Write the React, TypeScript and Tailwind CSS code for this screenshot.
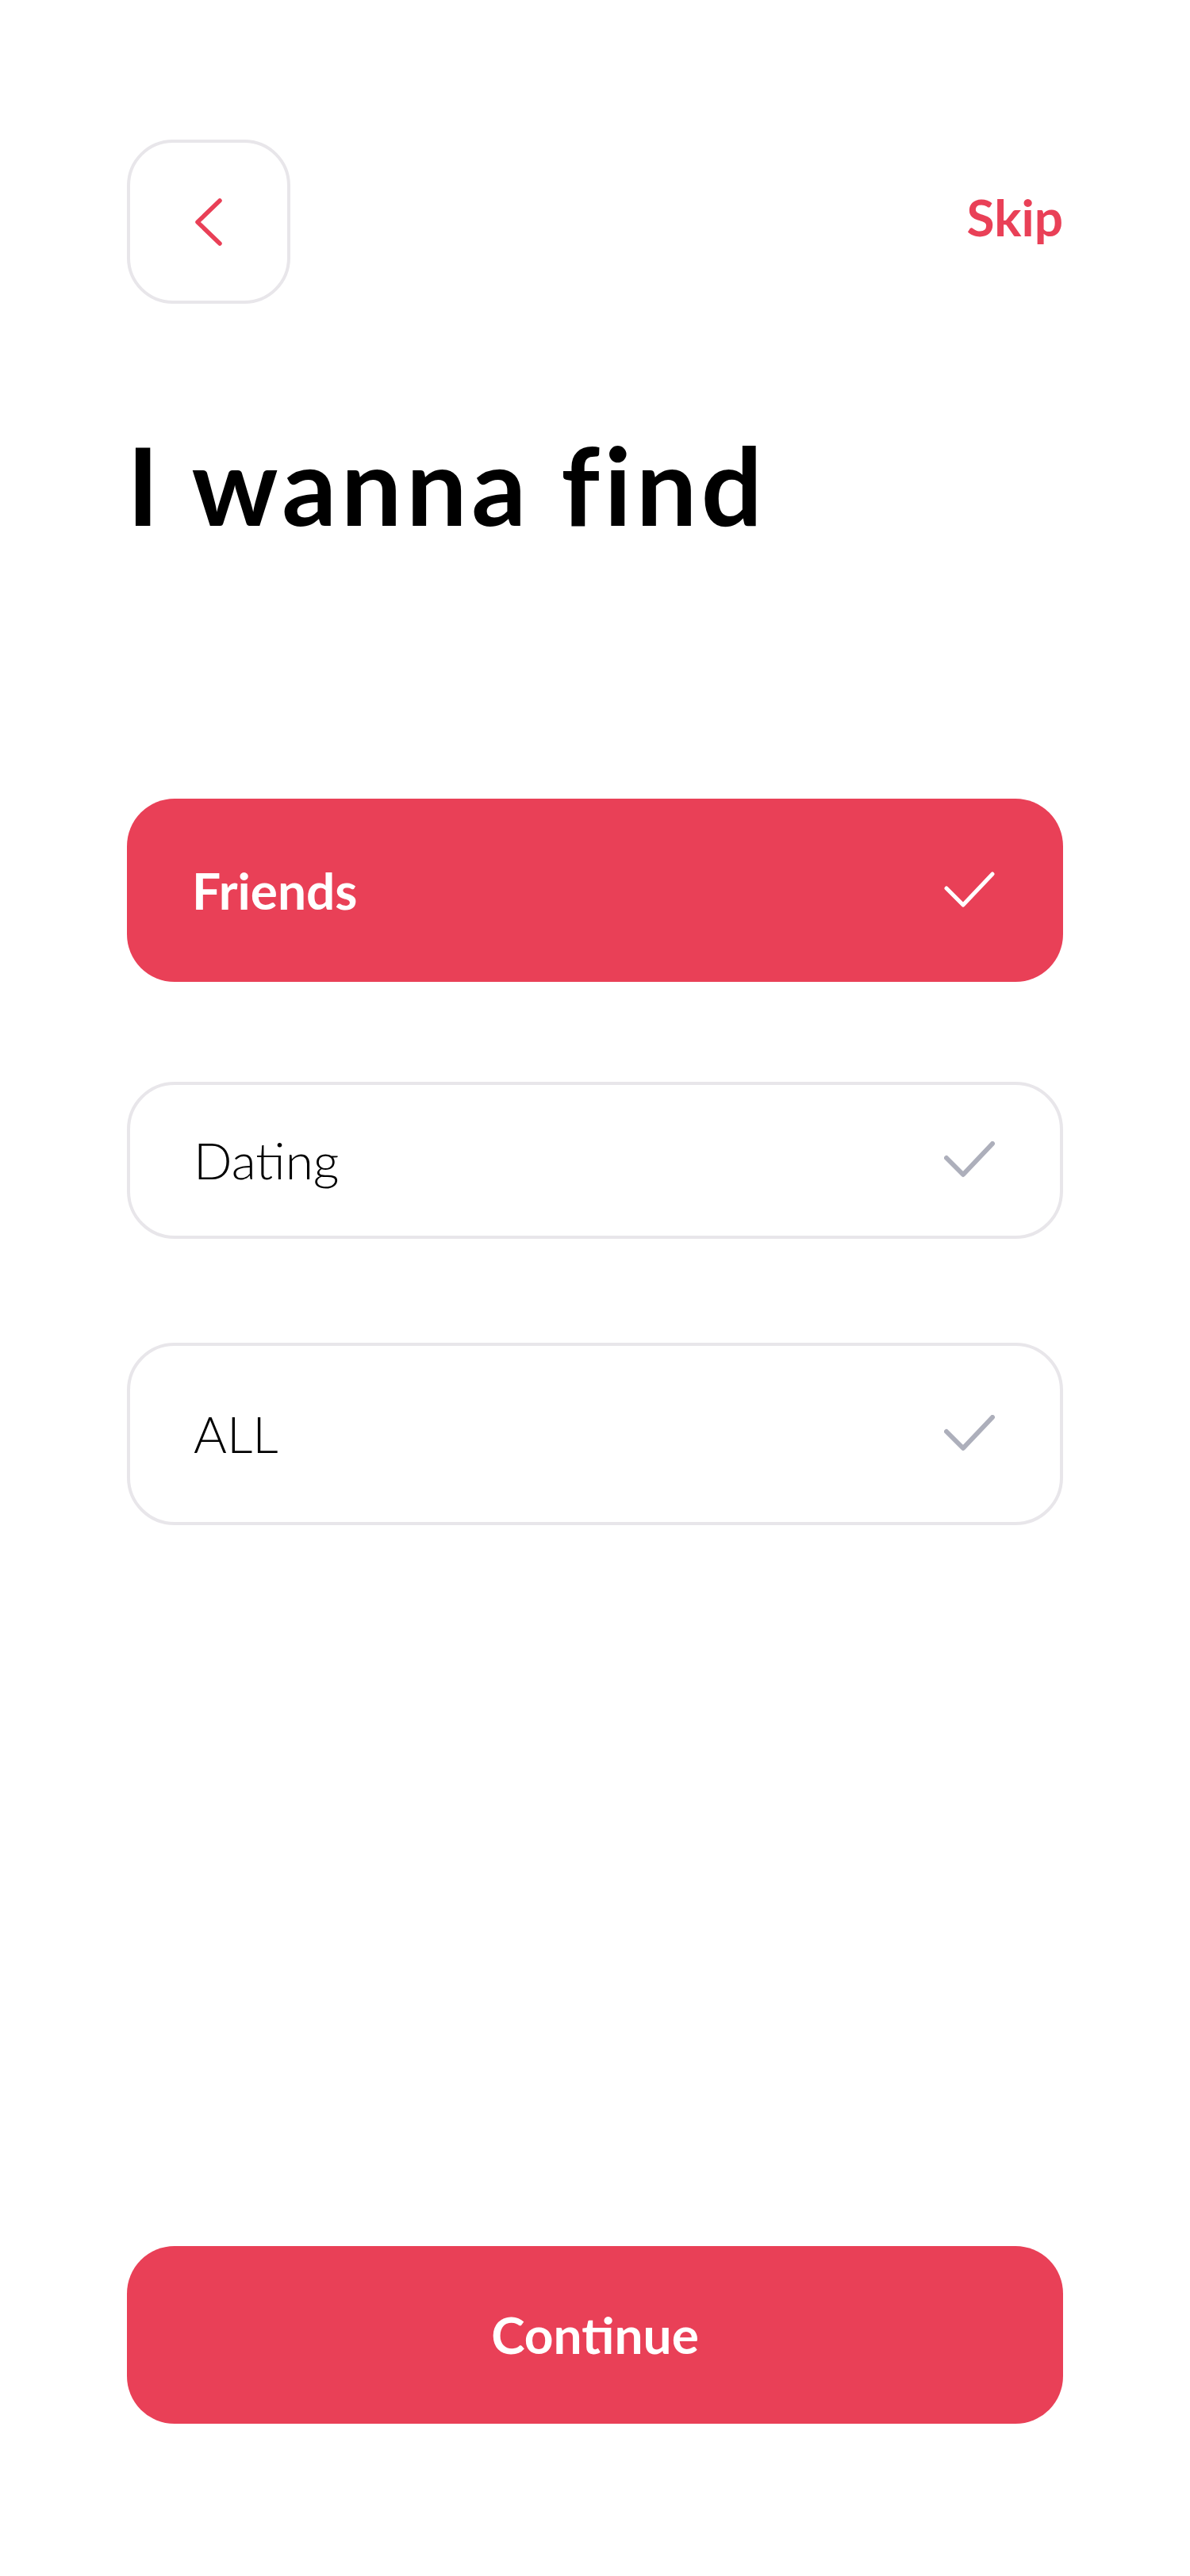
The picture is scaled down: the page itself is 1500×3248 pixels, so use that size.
import React from "react";

const RED = "#E94057";

function Check({ color, width }: { color: string; width: number }) {
  return (
    <svg width="64" height="48" viewBox="0 0 64 48" fill="none">
      <polyline
        points="3,21 24,42 61,3"
        stroke={color}
        strokeWidth={width}
        strokeLinecap="round"
        strokeLinejoin="round"
      />
    </svg>
  );
}

function Option({ label, selected, h }: { label: string; selected?: boolean; h: string }) {
  if (selected) {
    return (
      <div className={`flex ${h} items-center justify-between rounded-[60px] bg-[#E94057] pl-[82px] pr-[86px]`}>
        <span className="text-[64px] font-bold leading-none text-white">{label}</span>
        <Check color="#ffffff" width={5} />
      </div>
    );
  }
  return (
    <div className={`flex ${h} items-center justify-between rounded-[60px] border-[4px] border-[#E8E6EA] bg-white pl-[80px] pr-[82px]`}>
      <span className="text-[64px] font-light leading-none text-black">{label}</span>
      <Check color="#ADAFBB" width={6} />
    </div>
  );
}

export default function App() {
  return (
    <div
      className="flex min-h-[3248px] w-full flex-col bg-white px-[160px]"
      style={{ fontFamily: "Lato, 'Open Sans', 'Noto Sans', sans-serif" }}
    >
      <div className="mt-[176px] flex items-center justify-between">
        <button className="flex h-[207px] w-[206px] items-center justify-center rounded-[58px] border-[4px] border-[#E8E6EA] bg-white">
          <svg width="40" height="64" viewBox="0 0 40 64" fill="none">
            <polyline
              points="34,5 6,32 34,59"
              stroke={RED}
              strokeWidth="5.5"
              strokeLinecap="round"
              strokeLinejoin="round"
            />
          </svg>
        </button>
        <span className="pb-[12px] text-[64px] font-bold leading-none text-[#E94057]">Skip</span>
      </div>

      <h1 className="mt-[160px] text-[136px] font-bold leading-none tracking-[5.5px] text-black">I wanna find</h1>

      <div className="mt-[328px] flex flex-col">
        <Option label="Friends" selected h="h-[231px]" />
        <div className="mt-[126px]">
          <Option label="Dating" h="h-[198px]" />
        </div>
        <div className="mt-[131px]">
          <Option label="ALL" h="h-[230px]" />
        </div>
      </div>

      <button className="mb-[192px] mt-auto flex h-[224px] w-full items-center justify-center rounded-[60px] bg-[#E94057]">
        <span className="text-[64px] font-bold leading-none text-white">Continue</span>
      </button>
    </div>
  );
}
